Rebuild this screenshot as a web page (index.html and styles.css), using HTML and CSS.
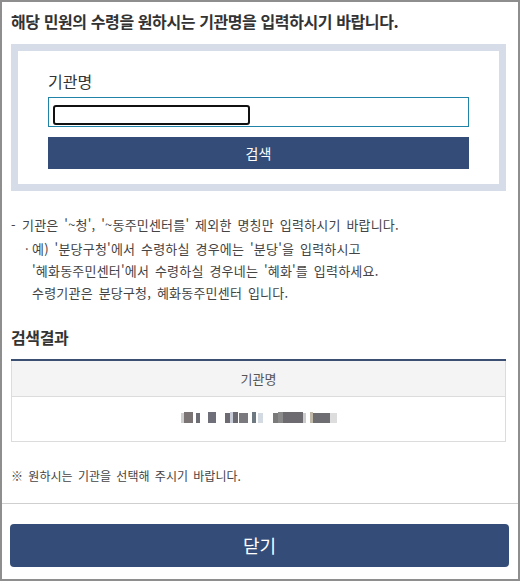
FILE: index.html
```html
<!DOCTYPE html>
<html lang="ko">
<head>
<meta charset="utf-8">
<title>기관명 검색</title>
<link rel="stylesheet" href="styles.css">
</head>
<body>
<div class="frame">
  <div class="content">
    <h1 class="title">해당 민원의 수령을 원하시는 기관명을 입력하시기 바랍니다.</h1>
    <div class="search-box">
      <div class="search-inner">
        <div class="label">기관명</div>
        <div class="input-box"><span class="mask"></span></div>
        <button class="btn-search" type="button">검색</button>
      </div>
    </div>
    <ul class="notes">
      <li class="note-main"><span class="dash">-</span>기관은 '~청', '~동주민센터를' 제외한 명칭만 입력하시기 바랍니다.</li>
      <li class="note-sub"><span class="dot">·</span>예) '분당구청'에서 수령하실 경우에는 '분당'을 입력하시고<br>'혜화동주민센터'에서 수령하실 경우네는 '혜화'를 입력하세요.<br>수령기관은 분당구청, 혜화동주민센터 입니다.</li>
    </ul>
    <h2 class="subtitle">검색결과</h2>
    <table class="result">
      <thead><tr><th>기관명</th></tr></thead>
      <tbody><tr><td>
        <svg class="redact" width="156" height="12" viewBox="0 0 156 12">
          <rect x="0" y="1" width="3" height="10" fill="#cfcfcf"/>
          <rect x="3" y="0" width="9" height="11" fill="#7a7474"/>
          <rect x="15" y="1" width="4" height="10" fill="#6d6d76"/>
          <rect x="27" y="0" width="8" height="11" fill="#6f6f7a"/>
          <rect x="44" y="1" width="5" height="10" fill="#6e6a72"/>
          <rect x="49" y="0" width="3" height="11" fill="#c8ccd8"/>
          <rect x="52" y="0" width="5" height="11" fill="#6a6a70"/>
          <rect x="58" y="1" width="9" height="10" fill="#7a7a7e"/>
          <rect x="71" y="0" width="4" height="11" fill="#6e7880"/>
          <rect x="77" y="1" width="5" height="10" fill="#d4dae2"/>
          <rect x="92" y="1" width="5" height="10" fill="#7a7a7a"/>
          <rect x="97" y="0" width="5" height="11" fill="#8a8a8a"/>
          <rect x="102" y="0" width="20" height="11" fill="#6d6a70"/>
          <rect x="122" y="1" width="3" height="10" fill="#cccccc"/>
          <rect x="129" y="0" width="3" height="11" fill="#c0b8a8"/>
          <rect x="132" y="1" width="17" height="10" fill="#6e6e72"/>
          <rect x="149" y="1" width="7" height="10" fill="#dddddd"/>
        </svg>
      </td></tr></tbody>
    </table>
    <p class="notice">※ 원하시는 기관을 선택해 주시기 바랍니다.</p>
  </div>
  <div class="footer">
    <button class="btn-close" type="button">닫기</button>
  </div>
</div>
</body>
</html>
```

FILE: styles.css
```css
* { box-sizing: border-box; }
html, body {
  margin: 0;
  padding: 0;
  background: #ffffff;
}
body {
  font-family: "Noto Sans CJK KR", "Noto Sans", sans-serif;
  color: #444;
}
.frame {
  width: 520px;
  height: 581px;
  border: 2px solid #8e8e8e;
  background: #fff;
}
.content {
  padding: 0 12px 0 9px;
}
.title {
  margin: 7px 0 0;
  font-size: 16px;
  line-height: 24px;
  font-weight: 700;
  color: #333;
  letter-spacing: -0.4px;
}
.search-box {
  margin-top: 11px;
  border: 7px solid #d6dde9;
  height: 147px;
}
.search-inner {
  padding: 17px 30px 0;
}
.label {
  font-size: 16px;
  line-height: 26px;
  color: #333;
  height: 29px;
}
.input-box {
  height: 30px;
  border: 1px solid #2283a8;
  padding: 7px 4px 0;
  display: flex;
  align-items: flex-start;
}
.mask {
  display: block;
  width: 197px;
  height: 20px;
  border: 2px solid #111;
  border-radius: 3px;
  background: #fff;
}
.btn-search {
  display: block;
  width: 100%;
  height: 32px;
  margin-top: 10px;
  border: 0;
  background: #344d78;
  color: #fff;
  font-family: inherit;
  font-size: 14px;
  padding: 0;
  cursor: pointer;
}
.notes {
  list-style: none;
  margin: 23px 0 0;
  padding: 0;
  font-size: 13px;
  line-height: 22px;
  color: #444;
  word-spacing: 2px;
  letter-spacing: 0.2px;
}
.note-main {
  position: relative;
  padding-left: 11px;
}
.dash {
  position: absolute;
  left: 0;
}
.note-sub {
  position: relative;
  margin-top: 2px;
  padding-left: 21px;
}
.dot {
  position: absolute;
  left: 14px;
}
.subtitle {
  margin: 21px 0 0;
  font-size: 16px;
  line-height: 24px;
  font-weight: 700;
  color: #333;
  letter-spacing: -0.4px;
}
.result {
  width: 100%;
  margin-top: 10px;
  border-collapse: collapse;
  border-top: 2px solid #3a4f72;
}
.result th {
  height: 36px;
  padding: 0;
  background: #f4f4f4;
  border: 1px solid #dcdcdc;
  border-top: 0;
  font-size: 13px;
  font-weight: 400;
  color: #555;
}
.result td {
  height: 45px;
  padding: 0 0 6px;
  border: 1px solid #dcdcdc;
  text-align: center;
  vertical-align: middle;
}
.redact {
  display: inline-block;
  vertical-align: middle;
}
.notice {
  margin: 24px 0 0;
  font-size: 12px;
  line-height: 20px;
  color: #444;
  word-spacing: 2px;
}
.footer {
  margin-top: 17px;
  border-top: 1px solid #cfcfcf;
  padding: 20px 9px 0 8px;
}
.btn-close {
  display: block;
  width: 100%;
  height: 43px;
  border: 0;
  border-radius: 4px;
  background: #344d78;
  color: #fff;
  font-family: inherit;
  font-size: 18px;
  padding: 0;
  cursor: pointer;
}
```
